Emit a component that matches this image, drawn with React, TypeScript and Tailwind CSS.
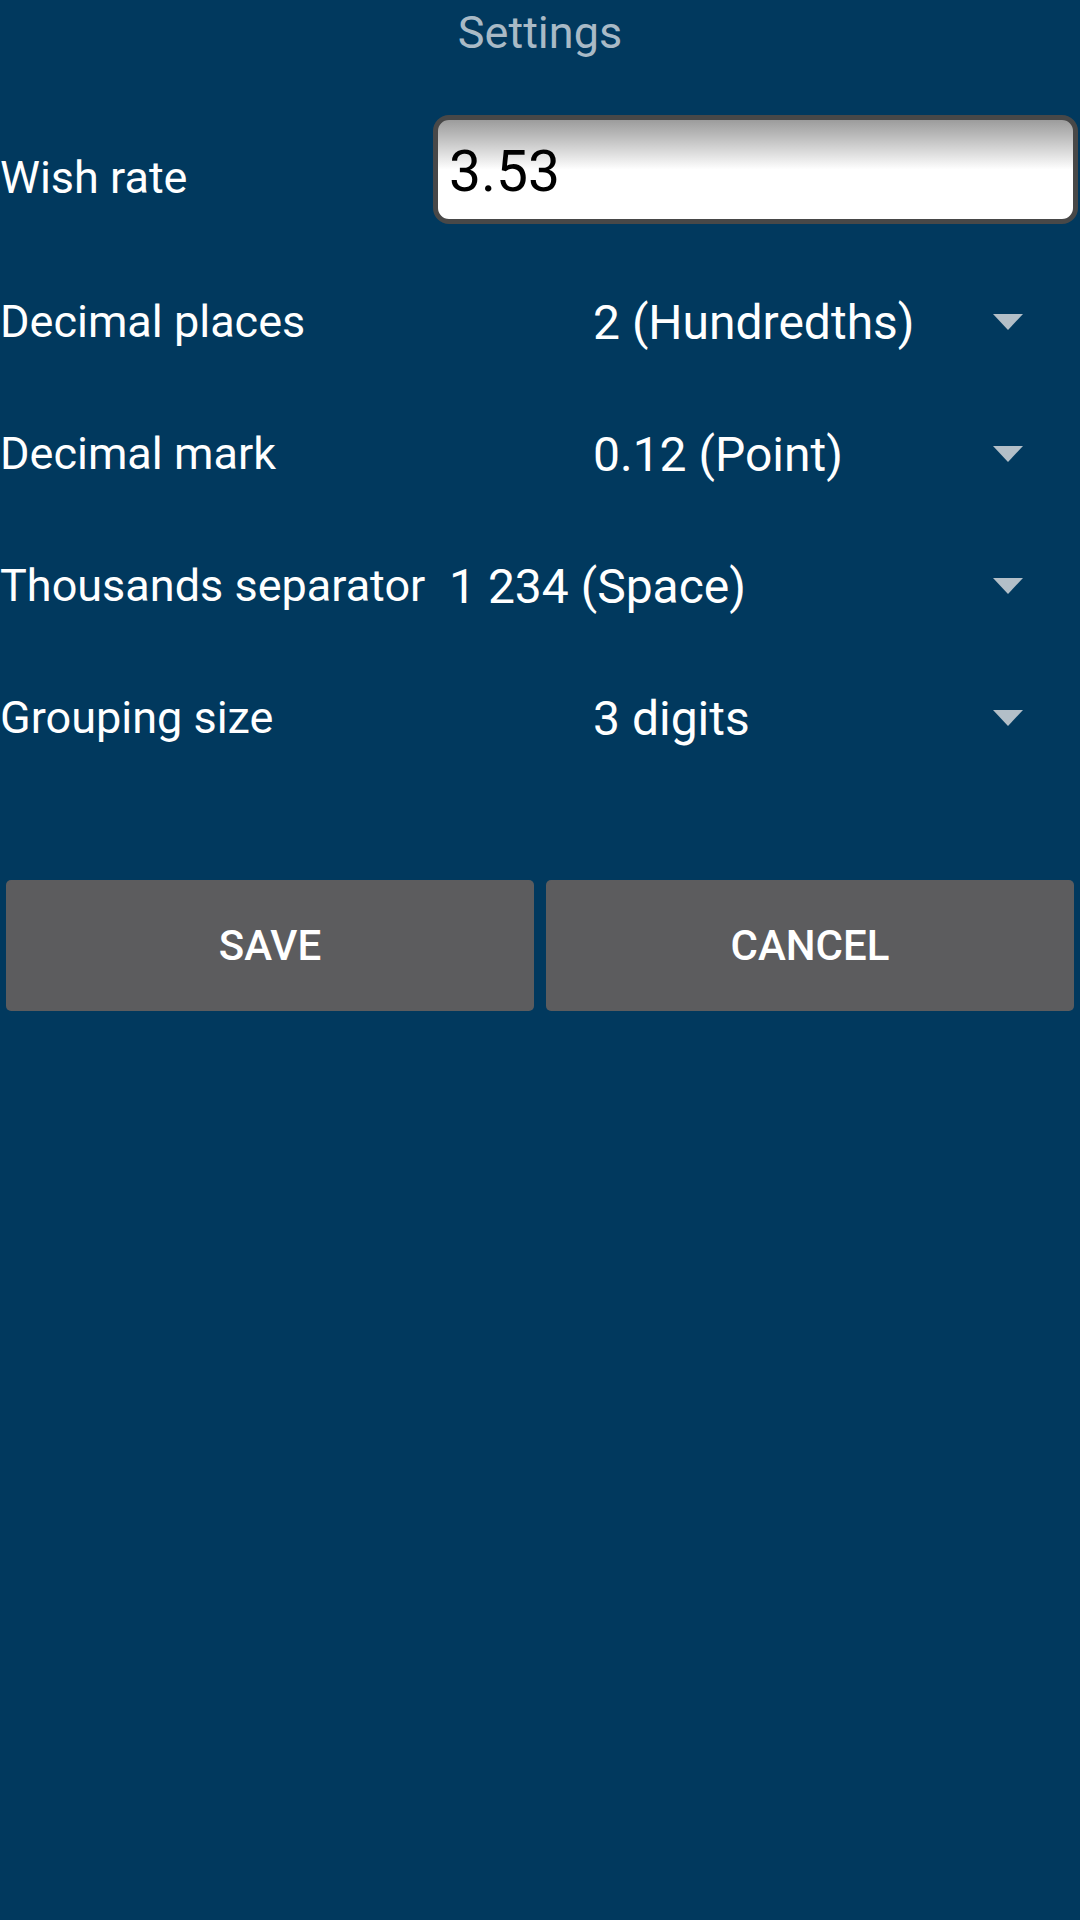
import React from "react"

type Row = {
  label: string
  value: string
  labelWidth: string
}

const rows: Row[] = [
  { label: "Decimal places", value: "2 (Hundredths)", labelWidth: "w-[593px]" },
  { label: "Decimal mark", value: "0.12 (Point)", labelWidth: "w-[593px]" },
  { label: "Thousands separator", value: "1 234 (Space)", labelWidth: "w-[449px]" },
  { label: "Grouping size", value: "3 digits", labelWidth: "w-[593px]" },
]

function Arrow() {
  return (
    <svg width="30" height="16" viewBox="0 0 30 16" className="shrink-0">
      <polygon points="0,0 30,0 15,16" fill="#b3bfc8" />
    </svg>
  )
}

function SpinnerRow({ label, value, labelWidth }: Row) {
  return (
    <div className="flex h-[132px] items-center">
      <div className={`${labelWidth} shrink-0 whitespace-nowrap text-[45px] text-white`}>{label}</div>
      <div className="flex-1 whitespace-nowrap pt-[2px] text-[48px] text-white">{value}</div>
      <div className="mr-[57px]">
        <Arrow />
      </div>
    </div>
  )
}

export default function App() {
  return (
    <div
      className="min-h-[1920px] w-[1080px] bg-[#01395e]"
      style={{ fontFamily: "Roboto, 'Noto Sans', sans-serif" }}
    >
      {/* title */}
      <div className="flex h-[66px] items-center justify-center text-[45px] text-[#a9bac6]">
        Settings
      </div>

      {/* wish rate */}
      <div className="mt-[49px] flex h-[109px] items-center">
        <div className="w-[433px] shrink-0 pt-[16px] text-[45px] text-white">Wish rate</div>
        <div className="mr-[2px] flex h-full flex-1 items-center rounded-[16px] border-[5px] border-[#484848] bg-linear-to-b from-[#9c9c9c] via-white via-50% to-white pl-[11px]">
          <span className="pt-[4px] text-[57px] text-black">3.53</span>
        </div>
      </div>

      <div className="mt-[32px]">
        {rows.map((r) => (
          <SpinnerRow key={r.label} {...r} />
        ))}
      </div>

      {/* buttons */}
      <div className="mt-[96px] flex gap-[12px] px-[6px]">
        <button className="flex h-[131px] flex-1 items-center justify-center rounded-[5px] bg-[#5c5c5e] text-[42px] font-medium text-white">
          SAVE
        </button>
        <button className="flex h-[131px] flex-1 items-center justify-center rounded-[5px] bg-[#5c5c5e] text-[42px] font-medium text-white">
          CANCEL
        </button>
      </div>
    </div>
  )
}
